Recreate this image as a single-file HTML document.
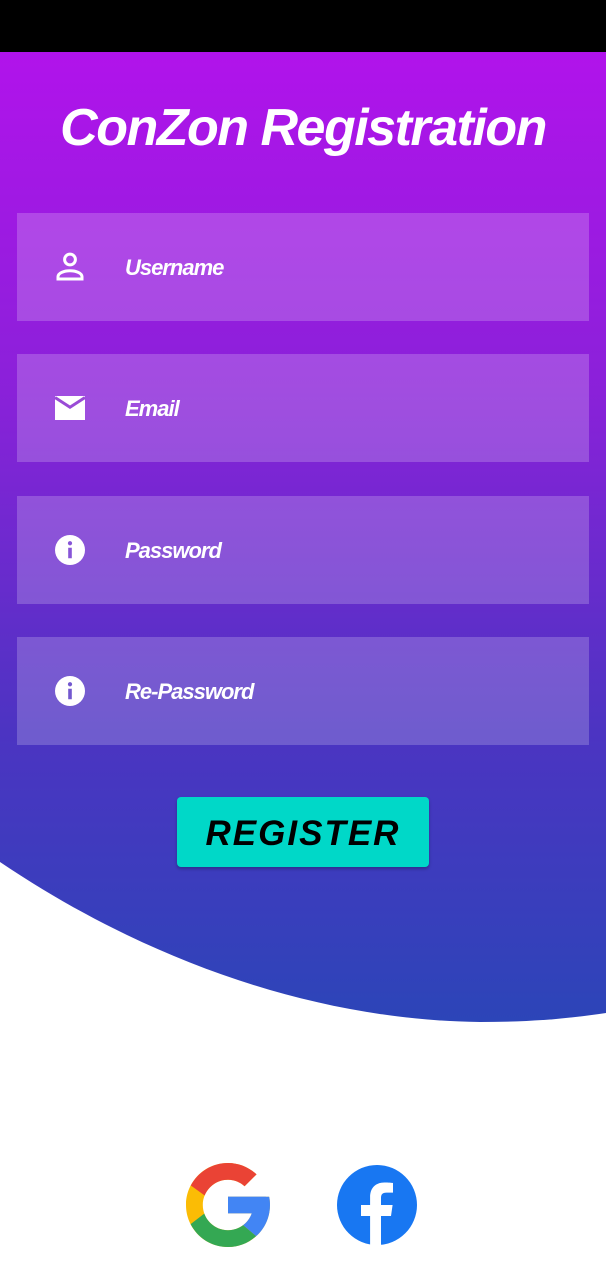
<!DOCTYPE html>
<html><head><meta charset="utf-8"><style>
html,body{margin:0;padding:0;width:606px;height:1280px;overflow:hidden;background:#fff;font-family:"Liberation Sans",sans-serif}
.top{position:absolute;left:0;top:0;width:606px;height:52px;background:#000}
.bg{position:absolute;left:0;top:52px}
h1{position:absolute;left:0;top:96px;width:606px;margin:0;text-align:center;color:#fff;font-size:52px;font-style:italic;font-weight:bold;letter-spacing:-1.5px;line-height:64px}
.f{position:absolute;left:17px;width:572px;height:108px;background:rgba(255,255,255,0.2)}
.f span{position:absolute;left:108px;top:0;line-height:110px;color:#fff;font-style:italic;font-weight:bold;font-size:22px;letter-spacing:-1px}
.f svg{position:absolute;left:35px;top:36px}
.btn{position:absolute;left:177px;top:797px;width:252px;height:70px;background:#00d8c8;border-radius:4px;box-shadow:0 2px 3px rgba(0,0,0,.25);text-align:center;line-height:74px;font-size:35px;font-style:italic;font-weight:bold;letter-spacing:2px;color:#000}
</style></head><body>
<div class="top"></div>
<svg class="bg" width="606" height="980" viewBox="0 52 606 980">
<defs><linearGradient id="g" x1="0" y1="0" x2="0" y2="1">
<stop offset="0" stop-color="#b113eb"/><stop offset="0.35" stop-color="#8a21d9"/><stop offset="0.7" stop-color="#4c34c2"/><stop offset="1" stop-color="#2c45b8"/></linearGradient></defs>
<path d="M0 52H606V1013C560 1020 520 1022 480 1022C300 1020 130 950 0 862Z" fill="url(#g)"/>
</svg>
<h1>ConZon Registration</h1>
<div class="f" style="top:213px"><svg width="36" height="36" viewBox="0 0 24 24"><circle cx="12" cy="7" r="3.6" fill="none" stroke="#fff" stroke-width="2"/><path d="M4 20v-1.5c0-2.5 4-4 8-4s8 1.5 8 4V20Z" fill="none" stroke="#fff" stroke-width="2"/></svg><span>Username</span></div>
<div class="f" style="top:354px"><svg width="36" height="36" viewBox="0 0 24 24"><path d="M2 4h20v16H2Z" fill="#fff"/><path d="M2 5l10 6.5L22 5" fill="none" stroke="#9a4bd6" stroke-width="2"/></svg><span>Email</span></div>
<div class="f" style="top:496px"><svg width="36" height="36" viewBox="0 0 24 24"><circle cx="12" cy="12" r="10" fill="#fff"/><rect x="10.8" y="10.5" width="2.4" height="7" fill="#8755d7"/><circle cx="12" cy="7.5" r="1.4" fill="#8755d7"/></svg><span>Password</span></div>
<div class="f" style="top:637px"><svg width="36" height="36" viewBox="0 0 24 24"><circle cx="12" cy="12" r="10" fill="#fff"/><rect x="10.8" y="10.5" width="2.4" height="7" fill="#7358cf"/><circle cx="12" cy="7.5" r="1.4" fill="#7358cf"/></svg><span>Re-Password</span></div>
<div class="btn">REGISTER</div>
<svg style="position:absolute;left:186px;top:1163px" width="84" height="84" viewBox="4 4 40 40">
<path fill="#FBBC05" d="M43.6 20.1H42V20H24v8h11.3C33.7 32.7 29.2 36 24 36c-6.6 0-12-5.4-12-12s5.4-12 12-12c3.1 0 5.8 1.2 7.9 3.1l5.7-5.7C34 6.1 29.3 4 24 4 12.9 4 4 12.9 4 24s8.9 20 20 20 20-8.9 20-20c0-1.3-.1-2.6-.4-3.9z"/>
<path fill="#EA4335" d="M6.3 14.7l6.6 4.8C14.7 15.1 19 12 24 12c3.1 0 5.8 1.2 7.9 3.1l5.7-5.7C34 6.1 29.3 4 24 4 16.3 4 9.7 8.3 6.3 14.7z"/>
<path fill="#34A853" d="M24 44c5.2 0 9.9-2 13.4-5.2l-6.2-5.2C29.2 35.1 26.7 36 24 36c-5.2 0-9.6-3.3-11.3-7.9l-6.5 5C9.5 39.6 16.2 44 24 44z"/>
<path fill="#4285F4" d="M43.6 20.1H42V20H24v8h11.3c-.8 2.2-2.2 4.2-4.1 5.6l6.2 5.2C37 39.2 44 34 44 24c0-1.3-.1-2.6-.4-3.9z"/>
</svg>
<svg style="position:absolute;left:337px;top:1165px" width="80" height="80" viewBox="0 0 80 80">
<circle cx="40" cy="40" r="40" fill="#1877f2"/>
<path d="M44 80V51h10l1.6-11H44v-7c0-3.2 1-5.4 5.6-5.4H56V18c-1.1-.2-4.6-.5-8.6-.5-8.5 0-14.3 5.2-14.3 14.7V40H24v11h9.1v29Z" fill="#fff"/>
</svg>
</body></html>
